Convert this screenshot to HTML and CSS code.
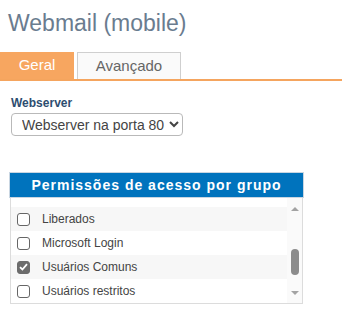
FILE: index.html
```html
<!DOCTYPE html>
<html lang="pt-BR">
<head>
    <meta charset="UTF-8">
    <meta name="viewport" content="width=device-width, initial-scale=1.0">
    <title>Webmail (mobile)</title>
    <link rel="stylesheet" href="styles.css">
</head>
<body>
    <h1 class="page-title">Webmail (mobile)</h1>

    <div class="tabs">
        <div class="tab active">Geral</div>
        <div class="tab">Avançado</div>
    </div>

    <div class="content">
        <label class="field-label" for="webserver">Webserver</label>
        <select id="webserver" class="field-select">
            <option>Webserver na porta 80</option>
            <option>Webserver na porta 443</option>
        </select>
    </div>

    <div class="panel">
        <div class="panel-header">Permissões de acesso por grupo</div>
        <div class="panel-list">
            <div class="rows">
                <div class="row">
                    <span class="check"></span>
                    <span class="row-text">Liberados</span>
                </div>
                <div class="row">
                    <span class="check"></span>
                    <span class="row-text">Microsoft Login</span>
                </div>
                <div class="row">
                    <span class="check checked">
                        <svg width="9" height="8" viewBox="0 0 9 8"><path d="M1 4.2 L3.4 6.5 L8 1.2" fill="none" stroke="#fff" stroke-width="1.8"/></svg>
                    </span>
                    <span class="row-text">Usuários Comuns</span>
                </div>
                <div class="row">
                    <span class="check"></span>
                    <span class="row-text">Usuários restritos</span>
                </div>
            </div>
            <div class="scrollbar">
                <div class="scroll-btn"><span class="arrow-up"></span></div>
                <div class="scroll-track"><span class="scroll-thumb"></span></div>
                <div class="scroll-btn"><span class="arrow-down"></span></div>
            </div>
        </div>
    </div>
</body>
</html>
```

FILE: styles.css
```css
* {
    margin: 0;
    padding: 0;
    box-sizing: border-box;
}

body {
    font-family: 'Liberation Sans', Arial, sans-serif;
    background: #fff;
    color: #444;
}

.page-title {
    margin: 10px 0 0 8px;
    height: 26px;
    line-height: 26px;
    font-size: 23px;
    font-weight: normal;
    color: #6a7c8f;
}

.tabs {
    display: flex;
    align-items: flex-end;
    margin-top: 16px;
    border-bottom: 2px solid #f5a55e;
}

.tab {
    height: 27px;
    line-height: 26px;
    font-size: 15px;
    text-align: center;
}

.tab.active {
    width: 74px;
    background: #f7a660;
    color: #fff;
}

.tab:not(.active) {
    width: 104px;
    margin-left: 3px;
    background: #fafafa;
    border: 1px solid #cfcfcf;
    border-bottom: none;
    color: #666;
}

.content {
    padding: 15px 0 0 11px;
}

.field-label {
    display: block;
    height: 14px;
    line-height: 14px;
    font-size: 12px;
    font-weight: bold;
    color: #2d4d70;
}

.field-select {
    margin-top: 3px;
    width: 172px;
    height: 23px;
    font-family: 'Liberation Sans', Arial, sans-serif;
    font-size: 14px;
    color: #444;
    background: #fff;
    border: 1px solid #b9b9b9;
    border-radius: 4px;
    padding-left: 6px;
}

.panel {
    margin: 36px 0 0 9px;
    width: 295px;
}

.panel-header {
    height: 26px;
    line-height: 24px;
    background: #0073bd;
    border: 1px solid #c9d6e2;
    color: #fff;
    font-size: 14px;
    font-weight: bold;
    letter-spacing: 1px;
    text-align: center;
}

.panel-list {
    display: flex;
    margin-left: 1px;
    width: 293px;
    height: 106px;
    border: 1px solid #dcdcdc;
    border-top: none;
    overflow: hidden;
}

.rows {
    flex: 1;
    padding-top: 9px;
}

.row {
    display: flex;
    align-items: center;
    gap: 12px;
    height: 24px;
    padding-left: 6px;
}

.row:nth-child(odd) {
    background: #f7f7f7;
}

.check {
    display: flex;
    align-items: center;
    justify-content: center;
    width: 13px;
    height: 13px;
    border: 1px solid #666;
    border-radius: 3px;
    background: #fff;
}

.check.checked {
    background: #6c6c6c;
    border-color: #6c6c6c;
}

.row-text {
    font-size: 12px;
    color: #444;
}

.scrollbar {
    display: flex;
    flex-direction: column;
    width: 15px;
    background: #fafafa;
}

.scroll-btn {
    display: flex;
    align-items: center;
    justify-content: center;
    height: 21px;
}

.scroll-track {
    flex: 1;
    display: flex;
    justify-content: center;
}

.scroll-thumb {
    margin-top: 30px;
    width: 8px;
    height: 26px;
    border-radius: 4px;
    background: #8c8c8c;
}

.arrow-up,
.arrow-down {
    width: 0;
    height: 0;
    border-left: 4px solid transparent;
    border-right: 4px solid transparent;
}

.arrow-up {
    border-bottom: 4px solid #a3a3a3;
}

.arrow-down {
    border-top: 4px solid #a3a3a3;
}
```
